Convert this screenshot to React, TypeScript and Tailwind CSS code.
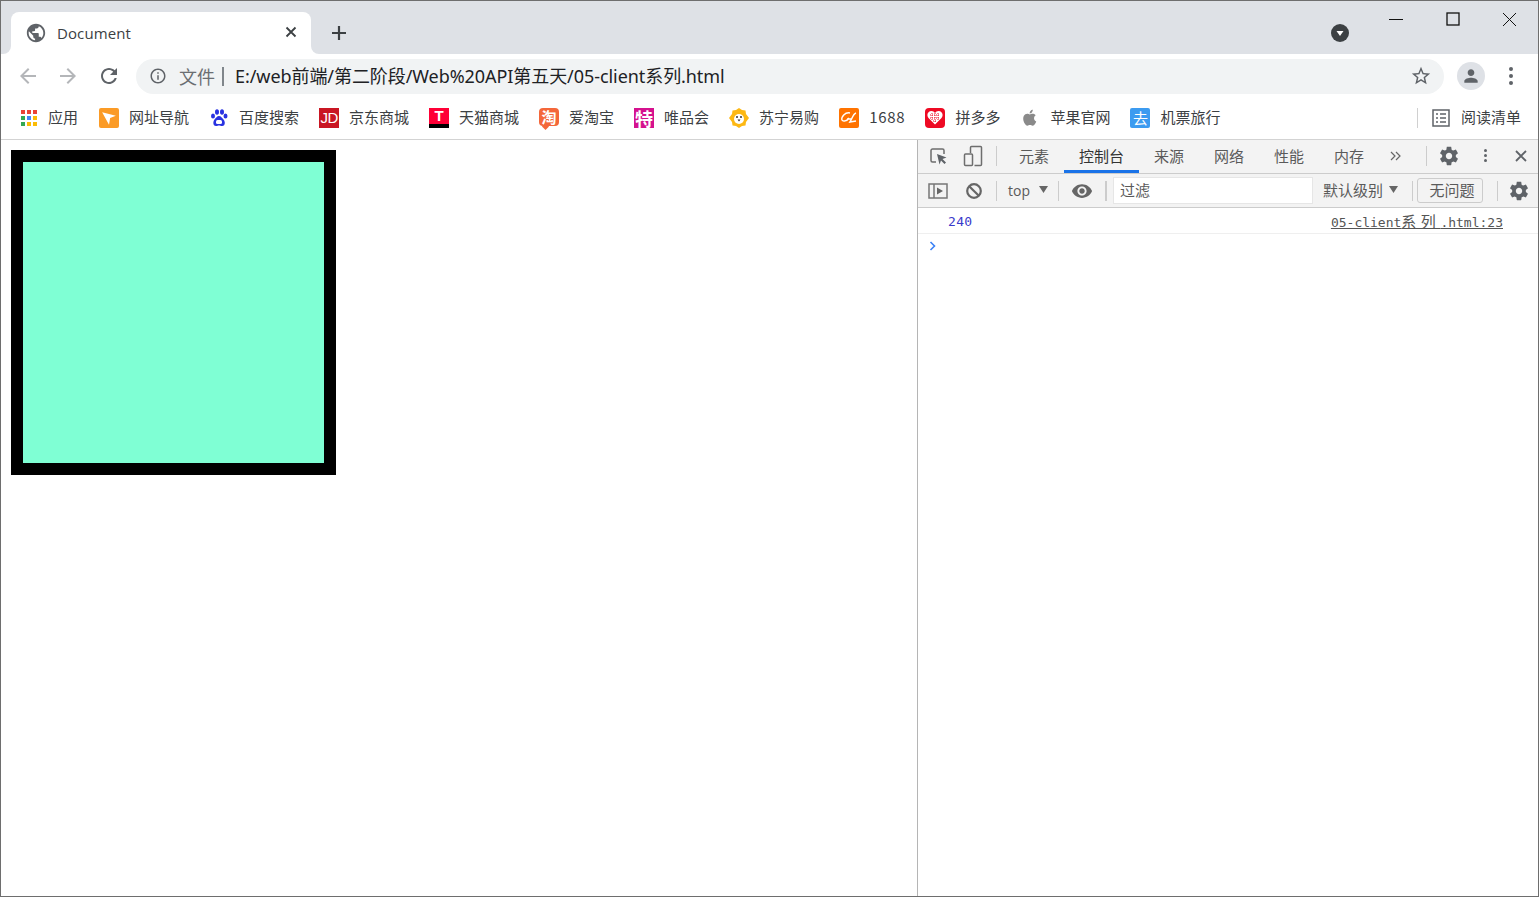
import type { ReactNode } from 'react';

const Mat = ({ d, size = 24, className = '' }: { d: string; size?: number; className?: string }) => (
	<svg width={size} height={size} viewBox="0 0 24 24" fill="currentColor" className={`shrink-0 ${className}`}>
		<path d={d} />
	</svg>
);

const GLOBE = 'M12 2C6.48 2 2 6.48 2 12s4.48 10 10 10 10-4.48 10-10S17.52 2 12 2zm-1 17.93c-3.95-.49-7-3.85-7-7.93 0-.62.08-1.21.21-1.79L9 15v1c0 1.1.9 2 2 2v1.93zm6.9-2.54c-.26-.81-1-1.39-1.9-1.39h-1v-3c0-.55-.45-1-1-1H8v-2h2c.55 0 1-.45 1-1V7h2c1.1 0 2-.9 2-2v-.41c2.93 1.19 5 4.06 5 7.41 0 2.08-.8 3.97-2.1 5.39z';
const BACK = 'M20 11H7.83l5.59-5.59L12 4l-8 8 8 8 1.41-1.41L7.83 13H20v-2z';
const FORWARD = 'M12 4l-1.41 1.41L16.17 11H4v2h12.17l-5.58 5.59L12 20l8-8z';
const RELOAD = 'M17.65 6.35C16.2 4.9 14.21 4 12 4c-4.42 0-7.99 3.58-7.99 8s3.57 8 7.99 8c3.73 0 6.84-2.55 7.73-6h-2.08c-.82 2.33-3.04 4-5.65 4-3.31 0-6-2.69-6-6s2.69-6 6-6c1.66 0 3.14.69 4.22 1.78L13 11h7V4l-2.35 2.35z';
const INFO = 'M11 7h2v2h-2zm0 4h2v6h-2zm1-9C6.48 2 2 6.48 2 12s4.48 10 10 10 10-4.48 10-10S17.52 2 12 2zm0 18c-4.41 0-8-3.59-8-8s3.59-8 8-8 8 3.59 8 8-3.59 8-8 8z';
const STAR = 'M22 9.24l-7.19-.62L12 2 9.19 8.63 2 9.24l5.46 4.73L5.82 21 12 17.27 18.18 21l-1.63-7.03L22 9.24zM12 15.4l-3.76 2.27 1-4.28-3.32-2.88 4.38-.38L12 6.1l1.71 4.04 4.38.38-3.32 2.88 1 4.28L12 15.4z';
const PERSON = 'M12 12c2.21 0 4-1.79 4-4s-1.79-4-4-4-4 1.79-4 4 1.79 4 4 4zm0 2c-2.67 0-8 1.34-8 4v2h16v-2c0-2.66-5.33-4-8-4z';
const GEAR = 'M19.43 12.98c.04-.32.07-.64.07-.98s-.03-.66-.07-.98l2.11-1.65c.19-.15.24-.42.12-.64l-2-3.46c-.12-.22-.39-.3-.61-.22l-2.49 1c-.52-.4-1.08-.73-1.69-.98l-.38-2.65C14.46 2.18 14.25 2 14 2h-4c-.25 0-.46.18-.49.42l-.38 2.65c-.61.25-1.17.59-1.69.98l-2.49-1c-.23-.09-.49 0-.61.22l-2 3.46c-.13.22-.07.49.12.64l2.11 1.65c-.04.32-.07.65-.07.98s.03.66.07.98l-2.11 1.65c-.19.15-.24.42-.12.64l2 3.46c.12.22.39.3.61.22l2.49-1c.52.4 1.08.73 1.69.98l.38 2.65c.03.24.24.42.49.42h4c.25 0 .46-.18.49-.42l.38-2.65c.61-.25 1.17-.59 1.69-.98l2.49 1c.23.09.49 0 .61-.22l2-3.46c.12-.22.07-.49-.12-.64l-2.11-1.65zM12 15.5c-1.93 0-3.5-1.57-3.5-3.5s1.57-3.5 3.5-3.5 3.5 1.57 3.5 3.5-1.57 3.5-3.5 3.5z';
const EYE = 'M12 4.5C7 4.5 2.73 7.61 1 12c1.73 4.39 6 7.5 11 7.5s9.27-3.11 11-7.5c-1.73-4.39-6-7.5-11-7.5zM12 17c-2.76 0-5-2.24-5-5s2.24-5 5-5 5 2.24 5 5-2.24 5-5 5zm0-8c-1.66 0-3 1.34-3 3s1.34 3 3 3 3-1.34 3-3-1.34-3-3-3z';

const Square = ({ bg, children, className = '' }: { bg: string; children?: ReactNode; className?: string }) => (
	<div className={`w-5 h-5 shrink-0 flex items-center justify-center text-white font-bold leading-none ${bg} ${className}`}>{children}</div>
);

const AppsIcon = () => {
	const colors = ['#ea4335', '#ea4335', '#ea4335', '#34a853', '#4285f4', '#fbbc05', '#34a853', '#fbbc05', '#fbbc05'];
	return (
		<div className="w-[18px] h-[18px] grid grid-cols-[4px_4px_4px] grid-rows-[4px_4px_4px] gap-[2px] place-content-center shrink-0">
			{colors.map((c, i) => (
				<svg key={i} width="4" height="4" className="block"><rect width="4" height="4" fill={c} /></svg>
			))}
		</div>
	);
};

const bookmarks: { label: string; icon: ReactNode; gap: string; text?: string }[] = [
	{ label: '应用', gap: 'mr-[21px]', icon: <AppsIcon /> },
	{
		label: '网址导航', gap: 'mr-5',
		icon: (
			<Square bg="bg-[#fb9b26]" className="rounded-[2px]">
				<svg width="16" height="16" viewBox="0 0 14 14"><path d="M1 2l12 3-5 2-1 6z" fill="#fff" /></svg>
			</Square>
		),
	},
	{
		label: '百度搜索', gap: 'mr-5',
		icon: (
			<svg width="20" height="20" viewBox="0 0 20 20" fill="#2932e1" className="shrink-0">
				<ellipse cx="4" cy="8" rx="2" ry="2.6" />
				<ellipse cx="8" cy="4" rx="2" ry="2.8" />
				<ellipse cx="13" cy="4" rx="2" ry="2.8" />
				<ellipse cx="16.5" cy="8" rx="2" ry="2.6" />
				<path d="M10 8c-2 0-3 2-4.500 3.500C4 13 3.500 18 7 18c1.500 0 2-.6 3-.6s1.800.6 3.200.6c3.500 0 3-5 1.300-6.500C13 10 12 8 10 8z" />
				<rect x="7" y="12" width="6" height="4" rx="1.500" fill="#fff" />
			</svg>
		),
	},
	{ label: '京东商城', gap: 'mr-5', icon: <Square bg="bg-[#c91623]" className="text-[15px] font-normal tracking-[-0.5px] font-['Liberation_Sans',sans-serif]">JD</Square> },
	{
		label: '天猫商城', gap: 'mr-5',
		icon: (
			<div className="w-5 h-5 shrink-0 flex flex-col">
				<div className="h-[16px] bg-[#ff0036] text-white text-[15px] font-bold leading-[16px] text-center font-['Liberation_Sans',sans-serif]">T</div>
				<div className="h-1 bg-black" />
			</div>
		),
	},
	{
		label: '爱淘宝', gap: 'mr-5',
		icon: (
			<div className="relative w-5 h-[18px] mb-[2px] shrink-0 rounded-[4px] bg-[#f4673a] flex items-center justify-center text-white font-bold text-[15px] leading-none">
				淘
				<div className="absolute left-[4px] -bottom-[3px] w-[5px] h-[5px] bg-[#f4673a] rotate-45" />
			</div>
		),
	},
	{ label: '唯品会', gap: 'mr-5', icon: <Square bg="bg-[#d5118e]" className="text-[18px]">特</Square> },
	{
		label: '苏宁易购', gap: 'mr-5',
		icon: (
			<svg width="20" height="20" viewBox="0 0 20 20" className="shrink-0">
				<path d="M10 0l3 2 3.500.5.500 3.500 3 4-3 4-.500 3.500-3.500.5-3 2-3-2-3.500-.5L3 14l-3-4 3-4 .500-3.500L7 2z" fill="#fdb813" />
				<circle cx="10" cy="11" r="5" fill="#fff" />
				<circle cx="8" cy="9" r="1" fill="#333" />
				<circle cx="12" cy="9" r="1" fill="#333" />
				<path d="M8.500 11.500h3L10 13.500z" fill="#333" />
			</svg>
		),
	},
	{
		label: '1688', gap: 'mr-5', text: 'tracking-[0.75px]',
		icon: (
			<Square bg="bg-[#ff7300]" className="rounded-[2px]">
				<svg width="18" height="14" viewBox="0 0 18 14" fill="none" stroke="#fff" strokeWidth="1.500"><path d="M10 2C5 1 1 6 2 9c1 2 5 1 7-2M7 8h4M16 2c-3 1-4 6-6 9l6-1" /></svg>
			</Square>
		),
	},
	{
		label: '拼多多', gap: 'mr-5',
		icon: (
			<Square bg="bg-[#ee0a24]" className="rounded-[4px]">
				<svg width="16" height="15" viewBox="0 0 16 15"><path d="M8 14.500L1.500 8C-1 5 1 1 4.500 1 6 1 7.200 1.800 8 3c.8-1.200 2-2 3.500-2C15 1 17 5 14.500 8z" fill="#fff" /><path d="M3 5h10M3 8h10M6 11h4M5 3v8M8 3v10M11 3v8" stroke="#ee0a24" strokeWidth="1" strokeDasharray="1 1" /></svg>
			</Square>
		),
	},
	{
		label: '苹果官网', gap: 'mr-5',
		icon: (
			<svg width="20" height="20" viewBox="0 0 20 20" fill="#8a8a8a" className="shrink-0">
				<path d="M14 10.300c0-2 1.600-2.900 1.700-3-1-1.400-2.400-1.600-2.900-1.600-1.200-.1-2.400.7-3 .7s-1.600-.7-2.600-.7c-1.300 0-2.600.8-3.300 2-1.400 2.400-.4 6 1 8 .7 1 1.500 2 2.500 2s1.400-.6 2.600-.6 1.500.6 2.600.6 1.800-1 2.500-2c.8-1.100 1.100-2.200 1.100-2.300-.1 0-2.200-.8-2.200-3.100zM12 4.300c.5-.7.900-1.600.8-2.500-.8 0-1.700.5-2.300 1.200-.5.600-.9 1.500-.8 2.400.9.100 1.800-.4 2.300-1.100z" />
			</svg>
		),
	},
	{ label: '机票旅行', gap: '', icon: <Square bg="bg-[#3c9bf0]" className="rounded-[2px] text-[15px] font-normal">去</Square> },
];

const Bookmark = ({ label, icon, gap, text = '' }: { label: string; icon: ReactNode; gap: string; text?: string }) => (
	<div className={`flex items-center gap-[10px] ${gap}`}>
		{icon}
		<span className={`text-[15px] text-[#3c4043] whitespace-nowrap ${text}`}>{label}</span>
	</div>
);

const Sep = ({ className = '' }: { className?: string }) => <div className={`w-px h-5 bg-[#ccc] shrink-0 ${className}`} />;

const tabs = ['元素', '控制台', '来源', '网络', '性能', '内存'];

const DevTools = () => (
	<div className="w-[621px] h-full shrink-0 border-l border-[#b5b5b5] flex flex-col font-['Noto_Sans_CJK_SC',sans-serif] text-[#5a5a5a]">
		<div className="h-[34px] bg-[#f3f3f3] border-b border-[#ccc] flex items-center">
			<div className="w-[78px] flex items-center pl-[10px] gap-[12px] shrink-0 mb-[2px]">
				<svg width="22" height="22" viewBox="0 0 22 22" fill="none" className="shrink-0">
					<path d="M8 17H4.500A1.500 1.500 0 0 1 3 15.500v-10A1.500 1.500 0 0 1 4.500 4h10A1.500 1.500 0 0 1 16 5.500V9" stroke="#6e6e6e" strokeWidth="1.500" />
					<path d="M9 9l9.500 3.500-4 1.500 3.500 3.500-1.500 1.500-3.500-3.500-1.500 4z" fill="#5f6368" />
				</svg>
				<svg width="22" height="22" viewBox="0 0 22 22" fill="none" stroke="#6e6e6e" strokeWidth="1.500" className="shrink-0">
					<path d="M8.500 8V2.500a1 1 0 0 1 1-1h9a1 1 0 0 1 1 1v17a1 1 0 0 1-1 1h-6" />
					<rect x="2.500" y="9" width="8" height="11.500" rx="1" />
				</svg>
			</div>
			<Sep className="mb-[2px]" />
			<div className="flex ml-[7px] h-full">
				{tabs.map((t, i) => (
					<div key={t} className={`h-full px-[15px] flex items-center justify-center text-[15px] whitespace-nowrap ${i === 1 ? 'border-b-[3px] border-[#1a73e8] text-[#333] pt-[3px]' : ''}`}>{t}</div>
				))}
			</div>
			<svg width="14" height="14" viewBox="0 0 14 14" fill="none" stroke="#666" strokeWidth="1.200" className="ml-[10px] mb-[2px]">
				<path d="M2 3l4 4-4 4M7 3l4 4-4 4" />
			</svg>
			<Sep className="ml-[23px] mb-[2px]" />
			<Mat d={GEAR} size={22} className="ml-[11px] mb-[2px] text-[#5f6368]" />
			<div className="ml-[24px] mb-[2px] flex flex-col gap-[2px]">
				<span className="w-[3px] h-[3px] rounded-full bg-[#5f6368]" />
				<span className="w-[3px] h-[3px] rounded-full bg-[#5f6368]" />
				<span className="w-[3px] h-[3px] rounded-full bg-[#5f6368]" />
			</div>
			<svg width="12" height="12" viewBox="0 0 12 12" stroke="#5f6368" strokeWidth="1.800" className="ml-[28px] mb-[2px]">
				<path d="M1 1l10 10M11 1L1 11" />
			</svg>
		</div>
		<div className="h-[34px] bg-[#f3f3f3] border-b border-[#ccc] flex items-center text-[15px]">
			<svg width="20" height="16" viewBox="0 0 20 16" fill="none" className="ml-[10px] shrink-0">
				<rect x="1" y="1" width="18" height="14" stroke="#777" strokeWidth="1.500" />
				<path d="M6 1v14" stroke="#777" strokeWidth="1.500" />
				<path d="M9 4.500l6 3.500-6 3.500z" fill="#666" />
			</svg>
			<svg width="18" height="18" viewBox="0 0 18 18" fill="none" stroke="#666" strokeWidth="2.200" className="ml-[17px] shrink-0">
				<circle cx="9" cy="9" r="6.800" />
				<path d="M4.200 4.200l9.600 9.600" />
			</svg>
			<Sep className="ml-[13px]" />
			<span className="ml-[11px] w-[24px] font-['Open_Sans',sans-serif] text-[14px]">top</span>
			<svg width="9" height="7" viewBox="0 0 9 7" fill="#666" className="ml-[7px] -mt-[2px]"><path d="M0 0h9L4.500 7z" /></svg>
			<Sep className="ml-[10px]" />
			<Mat d={EYE} size={22} className="ml-[12px] text-[#666]" />
			<div className="w-0.5 h-5 bg-[#ccc] ml-[12px] shrink-0" />
			<div className="ml-[6px] w-[200px] h-[27px] bg-white border border-[#e6e6e6] text-[#5a5a5a] pl-[6px] flex items-center shrink-0">过滤</div>
			<span className="ml-[10px] whitespace-nowrap">默认级别</span>
			<svg width="9" height="7" viewBox="0 0 9 7" fill="#666" className="ml-[6px] -mt-[2px]"><path d="M0 0h9L4.500 7z" /></svg>
			<Sep className="ml-[14px]" />
			<div className="ml-[4px] w-[66px] h-[25px] border border-[#ccc] rounded-[3px] flex items-center justify-center whitespace-nowrap pl-1">无问题</div>
			<Sep className="ml-[14px]" />
			<Mat d={GEAR} size={22} className="ml-[10px] text-[#5f6368]" />
		</div>
		<div className="h-[26px] border-b border-[#efefef] flex items-center justify-between pl-[30px] pr-[35px] pt-[2px] font-['DejaVu_Sans_Mono',monospace] text-[13px]">
			<span className="text-[#3a3acb] tracking-[0.3px]">240</span>
			<span className="underline text-[#555] whitespace-nowrap">05-client<span className="font-['Noto_Sans_CJK_SC',monospace] text-[15px] tracking-[4.500px]">系列</span>.html:23</span>
		</div>
		<div className="h-6 pl-[11px] flex items-center">
			<svg width="8" height="10" viewBox="0 0 8 10" fill="none" stroke="#3b82f6" strokeWidth="1.600"><path d="M1.500 1l4 4-4 4" /></svg>
		</div>
	</div>
);

export default function App() {
	return (
		<div className="w-[1539px] h-[897px] overflow-hidden border border-[#6e6e6e] flex flex-col bg-white font-['Noto_Sans_CJK_SC',sans-serif]">
			<div className="h-[53px] bg-[#dee1e6] flex items-end pl-[10px] shrink-0">
				<div className="relative w-[300px] h-[42px] bg-white rounded-t-[8px] flex items-center pl-[16px] pr-[14px]">
					<div className="absolute -left-2 bottom-0 w-2 h-2 bg-white">
						<div className="w-full h-full bg-[#dee1e6] rounded-br-[8px]" />
					</div>
					<div className="absolute -right-2 bottom-0 w-2 h-2 bg-white">
						<div className="w-full h-full bg-[#dee1e6] rounded-bl-[8px]" />
					</div>
					<Mat d={GLOBE} size={22} className="text-[#5f6368] -ml-[2px]" />
					<span className="ml-[10px] font-['Open_Sans',sans-serif] text-[15px] text-[#3c4043] tracking-[0.1px]">Document</span>
					<svg width="12" height="12" viewBox="0 0 12 12" stroke="#3c4043" strokeWidth="1.800" className="ml-auto -mt-[2px]">
						<path d="M1.500 1.500l9 9M10.500 1.500l-9 9" />
					</svg>
				</div>
				<svg width="16" height="16" viewBox="0 0 16 16" stroke="#3c4043" strokeWidth="2.200" className="ml-[20px] mb-[13px]">
					<path d="M8 1v14M1 8h14" />
				</svg>
				<div className="flex-1 self-stretch flex justify-end pt-[9px]">
					<svg width="18" height="18" viewBox="0 0 18 18" className="mt-[14px] mr-[40px]">
						<circle cx="9" cy="9" r="9" fill="#3c4043" />
						<path d="M5.500 7h7L9 12z" fill="#fff" />
					</svg>
					<svg width="14" height="2" className="mt-[9px] mr-[43px]"><rect width="14" height="1" fill="#111" /></svg>
					<svg width="14" height="14" fill="none" stroke="#111" className="mt-[2px] mr-[42px]"><rect x="1" y="1" width="12" height="12" strokeWidth="1.300" /></svg>
					<svg width="15" height="15" viewBox="0 0 15 15" stroke="#111" className="mt-[2px] mr-[21px]"><path d="M1 1l13 13M14 1L1 14" /></svg>
				</div>
			</div>

			<div className="h-[44px] flex items-center shrink-0">
				<Mat d={BACK} size={24} className="ml-[15px] text-[#b4b6b9]" />
				<Mat d={FORWARD} size={24} className="ml-4 text-[#b4b6b9]" />
				<Mat d={RELOAD} size={24} className="ml-[17px] text-[#5f6368]" />
				<div className="ml-[15px] w-[1308px] h-[35px] rounded-full bg-[#f1f3f4] flex items-center pl-[13px] pr-[12px]">
					<Mat d={INFO} size={18} className="text-[#5f6368]" />
					<span className="ml-[12px] text-[18px] text-[#6b6e72] leading-none">文件</span>
					<div className="w-0.5 h-[19px] bg-[#80868b] ml-[7px]" />
					<span className="ml-[11px] text-[18px] text-[#202124] leading-none tracking-[-0.07px] font-['Noto_Sans','Noto_Sans_CJK_SC',sans-serif]">E:/web前端/第二阶段/Web%20API第五天/05-client系列.html</span>
					<Mat d={STAR} size={22} className="ml-auto text-[#5f6368]" />
				</div>
				<div className="ml-[13px] w-7 h-7 rounded-full bg-[#dee1e6] flex items-center justify-center">
					<Mat d={PERSON} size={20} className="text-[#5f6368]" />
				</div>
				<div className="ml-[24px] flex flex-col gap-[3px]">
					<span className="w-1 h-1 rounded-full bg-[#5f6368]" />
					<span className="w-1 h-1 rounded-full bg-[#5f6368]" />
					<span className="w-1 h-1 rounded-full bg-[#5f6368]" />
				</div>
			</div>

			<div className="h-[42px] border-b border-[#d3d3d3] flex items-center pl-[19px] pb-[2px] shrink-0">
				{bookmarks.map((b) => (
					<Bookmark key={b.label} {...b} />
				))}
				<div className="ml-auto flex items-center mr-[17px]">
					<div className="w-px h-5 bg-[#d0d0d0] mr-[14px]" />
					<svg width="18" height="18" viewBox="0 0 18 18" fill="none" stroke="#5f6368" className="mr-[11px]">
						<rect x="1" y="1" width="16" height="16" strokeWidth="1.500" />
						<path d="M4 5h2M8 5h6M4 9h2M8 9h6M4 13h2M8 13h6" strokeWidth="1.500" />
					</svg>
					<span className="text-[15px] text-[#3c4043] whitespace-nowrap">阅读清单</span>
				</div>
			</div>

			<div className="flex-1 flex min-h-0">
				<div className="flex-1 min-w-0 pt-[10px] pl-[10px]">
					<div className="w-[325px] h-[325px] border-[12px] border-black bg-[#7fffd4]" />
				</div>
				<DevTools />
			</div>
		</div>
	);
}
